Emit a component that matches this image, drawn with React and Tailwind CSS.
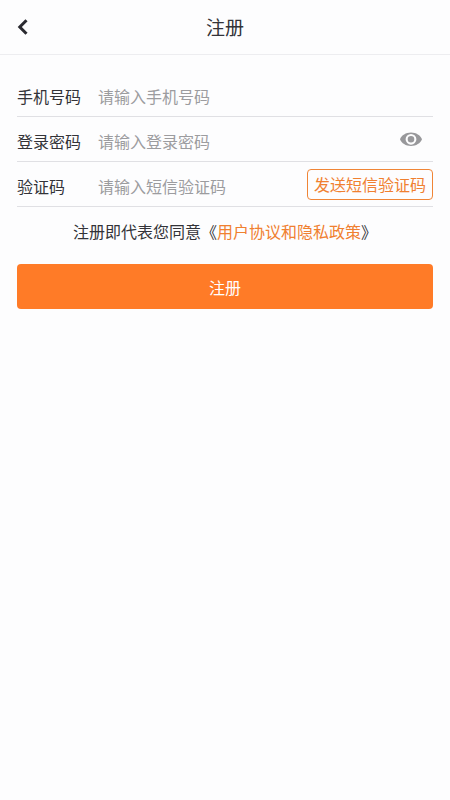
import { useState } from "react";

function BackIcon() {
  return (
    <svg className="h-4 w-3" viewBox="0 0 12 16" fill="none" stroke="#2a2a30" strokeWidth="3" aria-hidden="true">
      <path d="M9.500 1.200 2.800 8l6.700 6.800" />
    </svg>
  );
}

function EyeIcon() {
  return (
    <svg className="h-4 w-6" viewBox="0 0 24 16" aria-hidden="true">
      <path
        fill="#98989b"
        fillRule="evenodd"
        d="M12 1.600C6.800 1.600 2.600 4.400 1 8.300c1.600 4 5.800 6.700 11 6.700s9.400-2.700 11-6.700C21.400 4.400 17.200 1.600 12 1.600ZM12 13.700a5.400 5.400 0 1 1 0-10.800 5.400 5.400 0 0 1 0 10.800Zm0-2.100a3.300 3.300 0 1 0 0-6.600 3.300 3.300 0 0 0 0 6.600Z"
      />
    </svg>
  );
}

function Field({ id, label, type, placeholder, children }) {
  return (
    <div className="flex h-[45px] items-center border-b border-[#e0e0e4]">
      <label htmlFor={id} className="w-[81px] shrink-0 pt-1 leading-6">
        {label}
      </label>
      <input
        id={id}
        type={type}
        placeholder={placeholder}
        className="min-w-0 flex-1 bg-transparent pt-1 leading-6 outline-none placeholder:text-[#9c9c9f]"
      />
      {children}
    </div>
  );
}

export default function App() {
  const [visible, setVisible] = useState(false);

  return (
    <div className="min-h-screen bg-[#fdfdfe] font-['Noto_Sans_CJK_SC',sans-serif] text-base text-[#333338]">
      <header className="grid h-[55px] grid-cols-[1fr_auto_1fr] items-center border-b border-[#ededf0] px-[17px]">
        <button type="button" aria-label="返回" className="justify-self-start">
          <BackIcon />
        </button>
        <h1 className="text-[19px] leading-7">注册</h1>
      </header>

      <form className="px-[17px] pt-[17px]" onSubmit={(e) => e.preventDefault()}>
        <Field id="phone" label="手机号码" type="tel" placeholder="请输入手机号码" />
        <Field
          id="password"
          label="登录密码"
          type={visible ? "text" : "password"}
          placeholder="请输入登录密码"
        >
          <button
            type="button"
            aria-label="显示密码"
            className="mr-2.5"
            onClick={() => setVisible(!visible)}
          >
            <EyeIcon />
          </button>
        </Field>
        <Field id="code" label="验证码" type="text" placeholder="请输入短信验证码">
          <button
            type="button"
            className="h-[31px] shrink-0 rounded border border-[#f08536] px-1.5 leading-6 text-[#f08030]"
          >
            发送短信验证码
          </button>
        </Field>

        <p className="pt-3 text-center leading-6">
          注册即代表您同意《
          <a href="#terms" className="text-[#f08030]">用户协议和隐私政策</a>》
        </p>

        <button type="submit" className="mt-[21px] h-[45px] w-full rounded bg-[#ff7b27] leading-6 text-white">
          注册
        </button>
      </form>
    </div>
  );
}
